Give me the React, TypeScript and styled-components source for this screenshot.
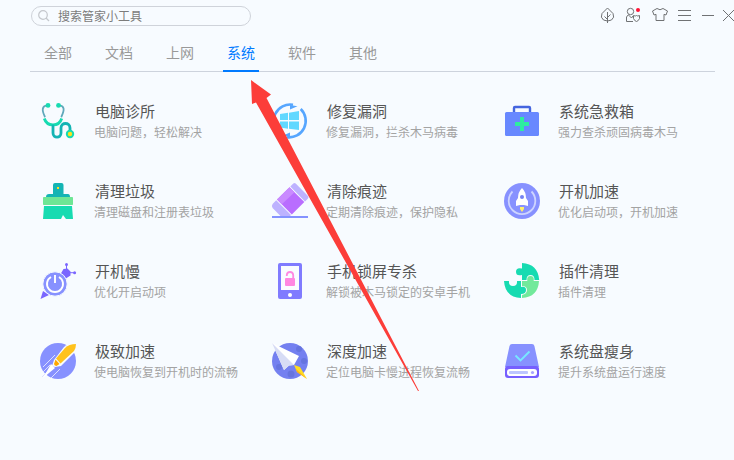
import React from 'react';
import styled, { createGlobalStyle } from 'styled-components';

const GlobalStyle = createGlobalStyle`
  * { box-sizing: border-box; }
  body {
    margin: 0;
    background: #f7fbff;
    font-family: "Noto Sans CJK SC", "Noto Sans", sans-serif;
  }
  button, input { font: inherit; }
`;

const Page = styled.main`
  position: relative;
  min-height: 100vh;
  overflow: hidden;
  background: #f7fbff;
`;

const Header = styled.header`
  display: flex;
  align-items: flex-start;
  justify-content: space-between;
  padding: 6px 0 0 31px;
`;

const SearchBox = styled.label`
  display: flex;
  align-items: center;
  gap: 8px;
  width: 220px;
  height: 20px;
  padding: 0 6px;
  border: 1px solid #cfd3da;
  border-radius: 10px;
  svg { flex: none; }
`;

const SearchInput = styled.input`
  flex: 1;
  min-width: 0;
  height: 18px;
  padding: 0;
  border: 0;
  outline: 0;
  background: transparent;
  color: #777;
  font-size: 12px;
  line-height: 18px;
  &::placeholder { color: #7c7c7c; opacity: 1; }
`;

const WindowTools = styled.div`
  display: flex;
  gap: 7px;
`;

const ToolButton = styled.button`
  display: flex;
  width: 18px;
  height: 18px;
  padding: 0;
  border: 0;
  background: transparent;
  cursor: pointer;
  svg { flex: none; display: block; overflow: visible; }
  &:last-child { width: 11px; overflow: hidden; }
`;

const Tabs = styled.nav`
  display: flex;
  gap: 25px;
  margin: 14px 19px 0 30px;
  padding-left: 10px;
  border-bottom: 1px solid #cdd3dd;
`;

const Tab = styled.button<{ $active: boolean }>`
  height: 32px;
  margin-bottom: -1px;
  padding: 0 4px 6px;
  border: 0;
  border-bottom: 2px solid ${(p) => (p.$active ? '#007aff' : 'transparent')};
  background: transparent;
  color: ${(p) => (p.$active ? '#007aff' : '#999')};
  font-size: 14px;
  line-height: 24px;
  cursor: pointer;
`;

const ToolGrid = styled.section`
  display: grid;
  grid-template-columns: repeat(3, minmax(0, 1fr));
  gap: 40px 2px;
  padding: 28px 0 30px 40px;
`;

const ToolCard = styled.button`
  display: flex;
  align-items: flex-start;
  gap: 18px;
  height: 40px;
  padding: 0;
  border: 0;
  background: transparent;
  text-align: left;
  cursor: pointer;
`;

const ToolIcon = styled.svg`
  flex: none;
  width: 36px;
  height: 36px;
  margin-top: 3px;
  overflow: visible;
`;

const ToolText = styled.span`
  display: flex;
  flex-direction: column;
  white-space: nowrap;
`;

const ToolTitle = styled.span`
  padding-left: 1px;
  color: #555;
  font-size: 15px;
  line-height: 22px;
`;

const ToolNote = styled.span`
  color: #a3a3a3;
  font-size: 12px;
  line-height: 20px;
`;

const Pointer = styled.svg`
  position: absolute;
  top: 80px;
  left: 250px;
  width: 170px;
  height: 312px;
  pointer-events: none;
`;

const icons: Record<string, React.ReactNode> = {
  clinic: (
    <g fill="none" strokeLinecap="round">
      <path d="M7 2.4C2 3 1.6 7 4.8 13.5M19.5 2.4c5 .6 5.2 4.6 2 11.1" stroke="#5fa8bb" strokeWidth="1.8" />
      <path d="M4.3 15.5c2.6 8.500 14.800 8.500 17.400 0" stroke="#17dbb1" strokeWidth="2.8" strokeLinecap="butt" />
      <path d="M13 23v7c0 5.500 8 5.500 8 0v-5c0-6 9-6 9 0v3" stroke="#14b4b4" strokeWidth="2.8" />
      <circle cx="8" cy="2.4" r="2.4" fill="#17dbb1" />
      <circle cx="18.5" cy="2.4" r="2.4" fill="#17dbb1" />
      <circle cx="30" cy="31" r="4.2" fill="#17dbb1" />
      <circle cx="30" cy="31" r="2.2" fill="#ffe11f" />
    </g>
  ),
  broom: (
    <g>
      <path d="M13 11V2q0-2 2-2h6.5q2 0 2 2v9H28q2 0 2 3H6q0-3 3-3z" fill="#14b4b4" />
      <rect x="17" y="4" width="2" height="2" fill="#ffe11f" />
      <rect x="3" y="14" width="30" height="8" rx=".7" fill="#6ee695" />
      <path d="M4 23h28l1 13h-7l-3-4-2 4H3z" fill="#17dbb1" />
    </g>
  ),
  slow: (
    <g>
      <path d="m3 28 6 4-8.5 4zM20 12l3.500-6 4-.5 3 3v4L25 16z" fill="#7a66ff" />
      <path d="M26.500 8V1.500M28 9.700h6.500" stroke="#7a66ff" fill="none" />
      <circle cx="26.5" cy="1.5" r="1.5" fill="#7a66ff" />
      <circle cx="34.6" cy="9.7" r="1.5" fill="#7a66ff" />
      <circle cx="15" cy="21" r="12.2" fill="#8791ff" stroke="#f7fbff" />
      <path d="M11 14a8 8 0 1 0 8 0M15 12v8" fill="none" stroke="#fff" strokeWidth="1.9" />
    </g>
  ),
  rush: (
    <g>
      <circle cx="18" cy="18" r="18" fill="#8791ff" />
      <path d="m3 24 12-12M2 34l14-14M20 26l-9 9M10 22l-7 7" stroke="#dce1ff" strokeWidth="1" />
      <path d="M36 0q-8 0-12 4L14 17l-2 6 3 1 6-1L35 9z" fill="#f7fbff" />
      <path d="M36 1q-7 0-11 4L16 15.500l4.500 5L34 8q2-3 2-7z" fill="#ffc21c" />
      <path d="m15.500 16.500 4 4.500-3 2q-2 0-2.500-2z" fill="#ffa800" />
      <path d="m11 21 4 4L3 35z" fill="#fff" />
    </g>
  ),
  patch: (
    <g>
      <path d="M28.700 6A16.500 16.500 0 0 1 15 34.200M7.300 30.500A16.500 16.500 0 0 1 21 1.800" fill="none" stroke="#56a6ff" strokeWidth="2.6" />
      <path d="m18 2 7.500 1.300L18 6.500zM18 34l-7.500-1.300L18 29.500z" fill="#56a6ff" />
      <path d="m8 11 8-1.200V17H8zm9-1.300L27 8v9H17zM8 18.500h8v7.200L8 24.500zm9 0h10V27l-10-1.200z" fill="#61d8ff" />
    </g>
  ),
  eraser: (
    <g>
      <path d="m18.300 3.500 3-3q1.200-1 2.400 0L36 13q1 1.200 0 2.400l-3 3zM4.200 17.200 19 32l-1 1H8.500L.6 25Q-.8 23 .6 21z" fill="#bdb2ff" />
      <path d="M17.500 4.300 32.300 19 19.800 31.400 5 16.500z" fill="#b96dff" />
      <path d="m17.500 4.300 5 5L9.800 21.300 5 16.500z" fill="#c98bff" />
      <path d="M0 33h36v2H0z" fill="#8492ff" />
    </g>
  ),
  phone: (
    <g>
      <rect x="6" width="24" height="36" rx="2" fill="#807bff" />
      <path d="M9 3h18v24H9z" fill="#f9fbff" />
      <circle cx="18" cy="32" r="2" fill="#fff" />
      <rect x="13" y="15" width="10" height="8" rx="1" fill="#ff86e1" />
      <path d="M14.800 13v-1q.2-3 3.200-3t3.200 3v4" fill="none" stroke="#ff86e1" strokeWidth="1.8" />
    </g>
  ),
  plane: (
    <g>
      <circle cx="18" cy="18" r="18" fill="#7480f0" />
      <circle cx="27" cy="6" r="3" fill="#6674df" />
      <circle cx="32" cy="18" r="3" fill="#6674df" />
      <circle cx="7" cy="24" r="3" fill="#6674df" />
      <circle cx="19" cy="31" r="3.5" fill="#6674df" />
      <path d="m0 0 27 13-5 9-5 .5-5 4.500z" fill="#fff" />
      <path d="m0 0 17 22.500-5 4.500zM0 0l22 22-5 .5z" fill="#d7dcf5" />
      <path d="m22 22 6 2 7 12-10-7z" fill="#ffdc21" />
      <path d="m24 26 11 10-10-7z" fill="#ffaf16" />
    </g>
  ),
  firstaid: (
    <g>
      <path d="M10 10V5q0-1 1-1h14q1 0 1 1v5" fill="none" stroke="#4565df" strokeWidth="2.4" />
      <rect x="1" y="9" width="34" height="24" rx="1.5" fill="#6888ff" />
      <path d="M16 14h4v5h5v4h-5v5h-4v-5h-5v-4h5z" fill="#2eeda0" />
    </g>
  ),
  boot: (
    <g>
      <circle cx="18" cy="18" r="18" fill="#8791ff" />
      <path d="M8.500 8.500a13.300 13.300 0 1 0 19 0" fill="none" stroke="#cdd4ff" strokeWidth="1.8" />
      <path d="M18 5q-4 4-4 10l-2 3v5l4-1h4l4 1v-5l-2-3q0-6-4-10z" fill="#fff" />
      <circle cx="18" cy="14" r="2" fill="#7582f3" />
      <path d="M16 24h4v2l-2 3-2-3z" fill="#fff06b" />
    </g>
  ),
  plugin: (
    <g>
      <path d="M18 0q16 1 17.200 17h-4.700q0-5-4-5t-4 5H18v-5q-6 1.500-6-3.200T18 5.500z" fill="#17dbb1" />
      <path d="M18 18h5.300q-.8-5 3.200-5t3.200 5H35q-1 16-17 17v-3q5-1 5-5t-5-4z" fill="#72e99b" />
      <path d="M0 18h5q-.5 5 4 5t4-5h4v6q5-1 5 3t-5 4v4Q1 34 0 18z" fill="#17dbb1" />
    </g>
  ),
  disk: (
    <g>
      <path d="M8 1h20q2 0 2.400 2L35 24H1L5.500 3Q6 1 8 1z" fill="#8791ff" />
      <rect x="1" y="23" width="34" height="12" rx="3" fill="#765fff" />
      <rect x="3" y="26" width="30" height="7" rx="3" fill="#fff" />
      <rect x="5" y="28" width="19" height="3" rx="1" fill="#bdc6ff" />
      <circle cx="28.5" cy="29.5" r="1.6" fill="#a9a5ff" />
      <path d="m11.500 12.500 5 5 9-9" fill="none" stroke="#77e8ff" strokeWidth="1.8" />
    </g>
  ),
};

const tabs = ['全部', '文档', '上网', '系统', '软件', '其他'];

const tools = [
  { icon: 'clinic', title: '电脑诊所', note: '电脑问题，轻松解决' },
  { icon: 'patch', title: '修复漏洞', note: '修复漏洞，拦杀木马病毒' },
  { icon: 'firstaid', title: '系统急救箱', note: '强力查杀顽固病毒木马' },
  { icon: 'broom', title: '清理垃圾', note: '清理磁盘和注册表垃圾' },
  { icon: 'eraser', title: '清除痕迹', note: '定期清除痕迹，保护隐私' },
  { icon: 'boot', title: '开机加速', note: '优化启动项，开机加速' },
  { icon: 'slow', title: '开机慢', note: '优化开启动项' },
  { icon: 'phone', title: '手机锁屏专杀', note: '解锁被木马锁定的安卓手机' },
  { icon: 'plugin', title: '插件清理', note: '插件清理' },
  { icon: 'rush', title: '极致加速', note: '使电脑恢复到开机时的流畅' },
  { icon: 'plane', title: '深度加速', note: '定位电脑卡慢进程恢复流畅' },
  { icon: 'disk', title: '系统盘瘦身', note: '提升系统盘运行速度' },
];

const windowTools = [
  { label: '加速', drawing: <path d="M9.500 2 4 7.500q-2 4 1.500 6.500 4 2 8 0Q17 11.500 15 7.500zM9.500 6v11M9.500 13.500l-3-3M9.500 11.500l3-3" /> },
  {
    label: '账户',
    drawing: (
      <>
        <circle cx="7.5" cy="5.5" r="3.2" />
        <path d="M5.500 8.500 3.500 11v4.500H10M5.500 9l3 3 1.500-2M10.500 9.500q2 1 3 0 1 1 3 0v3q-1 2.500-3 3-2-.5-3-3z" />
        <circle cx="15" cy="4" r="2" fill="#ff1236" stroke="none" />
      </>
    ),
  },
  { label: '换肤', drawing: <path d="M9 2.500 4.500 5 6 9l2-.7v6.200h8V8.300l2 .7 1.500-4L15 2.500q-3 2.500-6 0z" /> },
  { label: '菜单', drawing: <path d="M5 4.500h13M5 9.500h13M5 14.500h13" /> },
  { label: '最小化', drawing: <path d="M4 9.500h12" /> },
  { label: '关闭', drawing: <path d="m0 4 11 11M11 4 0 15" /> },
];

export default function App() {
  const [active, setActive] = React.useState('系统');
  return (
    <Page>
      <GlobalStyle />
      <Header>
        <SearchBox>
          <svg width="12" height="12" viewBox="0 0 12 12" fill="none" stroke="#c4c7cc" strokeWidth="1.2" aria-hidden="true">
            <circle cx="5" cy="5" r="4.3" />
            <path d="m8 8 3 3" />
          </svg>
          <SearchInput type="text" aria-label="搜索管家小工具" placeholder="搜索管家小工具" />
        </SearchBox>
        <WindowTools>
          {windowTools.map((tool) => (
            <ToolButton key={tool.label} type="button" aria-label={tool.label}>
              <svg width="18" height="18" viewBox="0 0 18 18" fill="none" stroke="#707274" strokeWidth="1" aria-hidden="true">
                {tool.drawing}
              </svg>
            </ToolButton>
          ))}
        </WindowTools>
      </Header>
      <Tabs>
        {tabs.map((tab) => (
          <Tab key={tab} type="button" $active={tab === active} onClick={() => setActive(tab)}>
            {tab}
          </Tab>
        ))}
      </Tabs>
      <ToolGrid>
        {tools.map((tool) => (
          <ToolCard key={tool.title} type="button">
            <ToolIcon viewBox="0 0 36 36" aria-hidden="true">{icons[tool.icon]}</ToolIcon>
            <ToolText>
              <ToolTitle>{tool.title}</ToolTitle>
              <ToolNote>{tool.note}</ToolNote>
            </ToolText>
          </ToolCard>
        ))}
      </ToolGrid>
      <Pointer viewBox="0 0 170 312" aria-hidden="true">
        <path d="m1 0 20 14.500-4.500 3.500L169 311h-1L6 22.500 2 24z" fill="#fc3d39" />
      </Pointer>
    </Page>
  );
}
